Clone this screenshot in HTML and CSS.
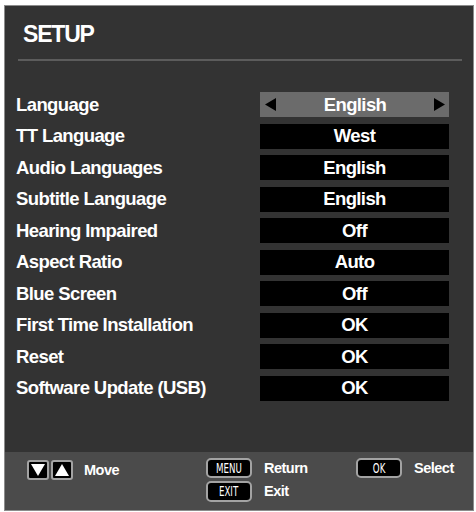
FILE: index.html
```html
<!DOCTYPE html>
<html lang="en">
<head>
    <meta charset="UTF-8">
    <meta name="viewport" content="width=device-width, initial-scale=1.0">
    <title>Setup</title>
    <link rel="stylesheet" href="styles.css">
</head>
<body>
    <div class="panel">
        <div class="header">
            <h1>SETUP</h1>
        </div>
        <div class="divider"></div>

        <div class="menu">
            <div class="row">
                <span class="label">Language</span>
                <span class="value active">
                    <svg class="arrow" width="11" height="13" viewBox="0 0 11 13"><polygon points="11,0 11,13 0,6.5" fill="#000"/></svg>
                    <span class="value-text">English</span>
                    <svg class="arrow" width="11" height="13" viewBox="0 0 11 13"><polygon points="0,0 0,13 11,6.5" fill="#000"/></svg>
                </span>
            </div>
            <div class="row"><span class="label">TT Language</span><span class="value">West</span></div>
            <div class="row"><span class="label">Audio Languages</span><span class="value">English</span></div>
            <div class="row"><span class="label">Subtitle Language</span><span class="value">English</span></div>
            <div class="row"><span class="label">Hearing Impaired</span><span class="value">Off</span></div>
            <div class="row"><span class="label">Aspect Ratio</span><span class="value">Auto</span></div>
            <div class="row"><span class="label">Blue Screen</span><span class="value">Off</span></div>
            <div class="row"><span class="label">First Time Installation</span><span class="value">OK</span></div>
            <div class="row"><span class="label">Reset</span><span class="value">OK</span></div>
            <div class="row"><span class="label">Software Update (USB)</span><span class="value">OK</span></div>
        </div>

        <div class="footer">
            <div class="group group-move">
                <div class="hint">
                    <span class="key key-arrow">
                        <svg width="14" height="12" viewBox="0 0 14 12"><polygon points="0,0 14,0 7,12" fill="#fff"/></svg>
                    </span>
                    <span class="key key-arrow">
                        <svg width="14" height="12" viewBox="0 0 14 12"><polygon points="0,12 14,12 7,0" fill="#fff"/></svg>
                    </span>
                    <span class="hint-text">Move</span>
                </div>
            </div>
            <div class="group group-nav">
                <div class="hint">
                    <span class="key"><span class="key-label">MENU</span></span>
                    <span class="hint-text">Return</span>
                </div>
                <div class="hint">
                    <span class="key key-exit"><span class="key-label">EXIT</span></span>
                    <span class="hint-text">Exit</span>
                </div>
            </div>
            <div class="group">
                <div class="hint">
                    <span class="key"><span class="key-label">OK</span></span>
                    <span class="hint-text">Select</span>
                </div>
            </div>
        </div>
    </div>
</body>
</html>
```

FILE: styles.css
```css
body {
    margin: 0;
    background: #fff;
    font-family: "Liberation Sans", Arial, sans-serif;
    font-weight: bold;
    color: #fff;
}

.panel {
    display: flex;
    flex-direction: column;
    width: 468px;
    height: 504px;
    margin: 5px 0 0 4px;
    border: 1px solid #8c8c8c;
    background: #333;
}

.header {
    padding: 17px 0 0 18px;
}

h1 {
    margin: 0;
    font-size: 23px;
    line-height: 23px;
    letter-spacing: -1.2px;
}

.divider {
    height: 2px;
    margin: 13px 11px 0 13px;
    background: #5c5c5c;
}

.menu {
    display: flex;
    flex-direction: column;
    gap: 6.5px;
    margin-top: 31px;
    padding: 0 24px 0 11px;
}

.row {
    display: flex;
    align-items: center;
    height: 25px;
}

.label {
    flex: 1;
    font-size: 18.5px;
    letter-spacing: -0.6px;
}

.value {
    display: flex;
    align-items: center;
    justify-content: center;
    width: 189px;
    height: 25px;
    background: #000;
    font-size: 18.5px;
    letter-spacing: -0.6px;
}

.value.active {
    justify-content: space-between;
    padding: 0 4px 0 5px;
    box-sizing: border-box;
    background: #6b6b6b;
}

.value-text {
    flex: 1;
    text-align: center;
}

.arrow {
    display: block;
}

.footer {
    display: flex;
    margin-top: auto;
    height: 52px;
    padding-top: 6px;
    background: #4b4b4b;
}

.group {
    display: flex;
    flex-direction: column;
    gap: 3px;
}

.group-move {
    width: 179px;
    padding: 2px 0 0 22px;
}

.group-nav {
    width: 150px;
}

.hint {
    display: flex;
    align-items: center;
    height: 20px;
}

.hint-text {
    margin-left: 12px;
    font-size: 14.5px;
    letter-spacing: -0.5px;
}

.group-move .hint-text {
    margin-left: 9px;
}

.key {
    display: flex;
    align-items: center;
    justify-content: center;
    box-sizing: border-box;
    width: 46px;
    height: 20px;
    border: 2px solid #a3a3a3;
    border-radius: 5px;
    background: #000;
}

.key-exit {
    height: 21px;
}

.key-arrow {
    width: 22px;
    height: 20px;
    margin-right: 2px;
    border-radius: 3px;
}

.key-label {
    font-family: "DejaVu Sans", sans-serif;
    font-weight: normal;
    font-size: 14px;
    transform: scaleX(0.62);
}
```
